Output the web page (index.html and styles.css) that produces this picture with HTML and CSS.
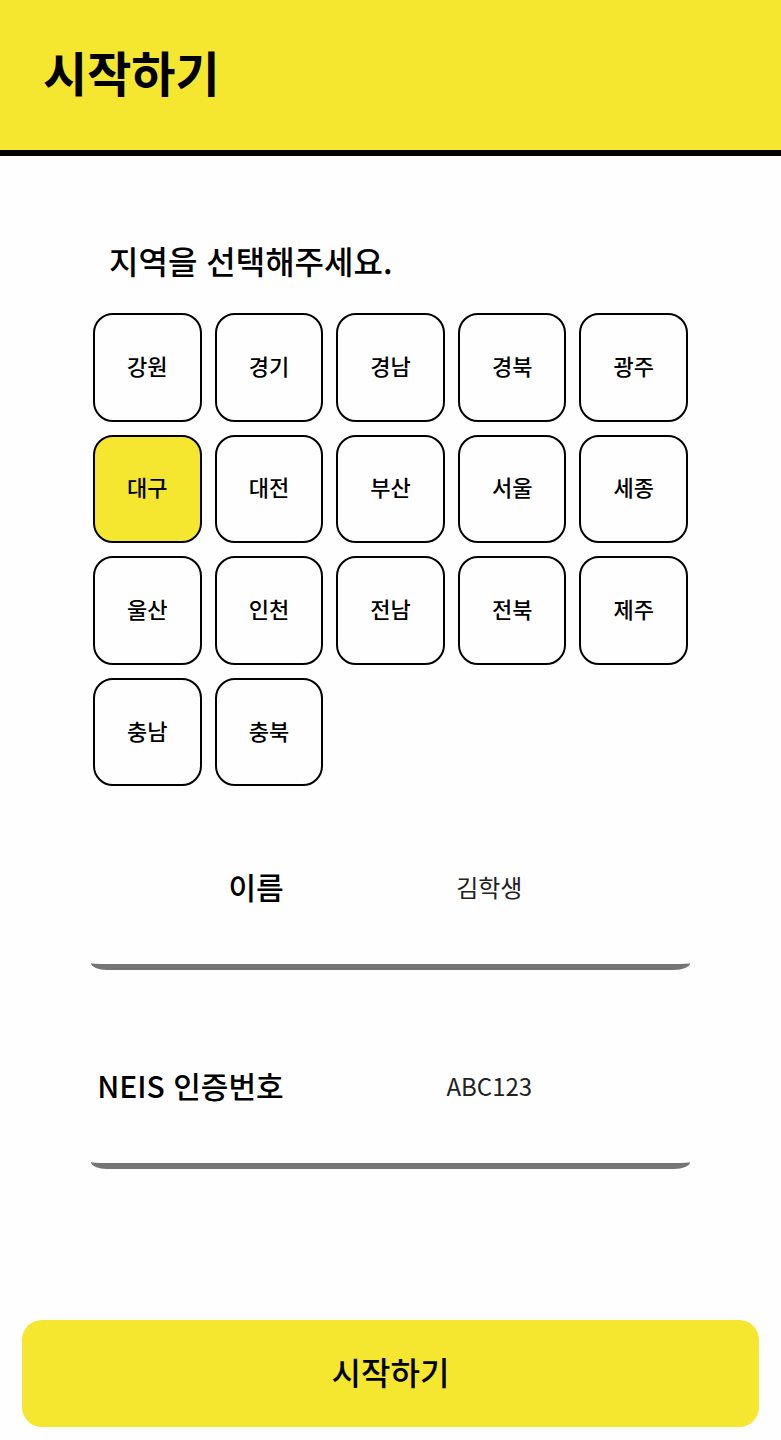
FILE: index.html
```html
<!DOCTYPE html>
<html lang="ko">
<head>
  <meta charset="utf-8">
  <meta name="viewport" content="width=device-width, initial-scale=1">
  <title>시작하기</title>
  <link rel="stylesheet" href="styles.css">
</head>
<body>
  <header class="header">
    <h1 class="title">시작하기</h1>
  </header>
  <form class="form">
    <fieldset class="regions">
      <legend class="question">지역을 선택해주세요.</legend>
      <div class="region-grid">
        <label class="region"><input type="radio" name="region">강원</label>
        <label class="region"><input type="radio" name="region">경기</label>
        <label class="region"><input type="radio" name="region">경남</label>
        <label class="region"><input type="radio" name="region">경북</label>
        <label class="region"><input type="radio" name="region">광주</label>
        <label class="region"><input type="radio" name="region" checked>대구</label>
        <label class="region"><input type="radio" name="region">대전</label>
        <label class="region"><input type="radio" name="region">부산</label>
        <label class="region"><input type="radio" name="region">서울</label>
        <label class="region"><input type="radio" name="region">세종</label>
        <label class="region"><input type="radio" name="region">울산</label>
        <label class="region"><input type="radio" name="region">인천</label>
        <label class="region"><input type="radio" name="region">전남</label>
        <label class="region"><input type="radio" name="region">전북</label>
        <label class="region"><input type="radio" name="region">제주</label>
        <label class="region"><input type="radio" name="region">충남</label>
        <label class="region"><input type="radio" name="region">충북</label>
      </div>
    </fieldset>
    <div class="fields">
      <div class="field">
        <label class="field-label" for="name">이름</label>
        <input class="field-input" id="name" type="text" value="김학생">
      </div>
      <div class="field">
        <label class="field-label" for="code">NEIS 인증번호</label>
        <input class="field-input" id="code" type="text" value="ABC123">
      </div>
    </div>
    <button class="start" type="submit">시작하기</button>
  </form>
</body>
</html>
```

FILE: styles.css
```css
* {
  box-sizing: border-box;
}

body {
  margin: 0;
  background: #fefefe;
  color: #000;
  font-family: "Noto Sans CJK KR", sans-serif;
}

.header {
  padding: 36px 43px 44px;
  background: #f5e72f;
  border-bottom: 6px solid #000;
}

.title {
  margin: 0;
  font-size: 48px;
  line-height: 70px;
  font-weight: 700;
}

.form {
  padding: 80px 22px 13px;
}

.regions {
  min-width: 0;
  margin: 0 71px;
  padding: 0;
  border: 0;
}

.question {
  padding: 0 16px 29px;
  font-size: 32px;
  line-height: 48px;
  font-weight: 500;
}

.region-grid {
  display: grid;
  grid-template-columns: repeat(5, 1fr);
  gap: 13px;
}

.region {
  position: relative;
  display: flex;
  align-items: center;
  justify-content: center;
  aspect-ratio: 1;
  padding-bottom: 5px;
  border: 2px solid #000;
  border-radius: 20px;
  font-size: 22px;
  line-height: 32px;
  font-weight: 500;
  cursor: pointer;
}

.region input {
  position: absolute;
  inset: 0;
  margin: 0;
  appearance: none;
  cursor: pointer;
}

.region:has(:checked) {
  background: #f5e72f;
}

.fields {
  display: grid;
  gap: 41px;
  margin: 26px 69px 151px;
}

.field {
  display: grid;
  grid-template-columns: 1fr 2fr;
  align-items: center;
  height: 158px;
  padding-bottom: 4px;
  border-bottom: 6px solid #757575;
  border-radius: 0 0 16px 16px / 0 0 7px 7px;
}

.field-label {
  padding-right: 7px;
  font-size: 30px;
  line-height: 48px;
  font-weight: 500;
  text-align: right;
  white-space: nowrap;
}

.field-input {
  width: 100%;
  min-width: 0;
  height: 100%;
  padding: 0 2px 0 0;
  border: 0;
  background: transparent;
  color: #222;
  font-family: inherit;
  font-size: 24px;
  text-align: center;
}

.start {
  display: block;
  width: 100%;
  padding: 28px 30px 32px;
  border: 0;
  border-radius: 20px;
  background: #f5e72f;
  color: #000;
  font-family: inherit;
  font-size: 32px;
  line-height: 47px;
  font-weight: 500;
  cursor: pointer;
}
```
